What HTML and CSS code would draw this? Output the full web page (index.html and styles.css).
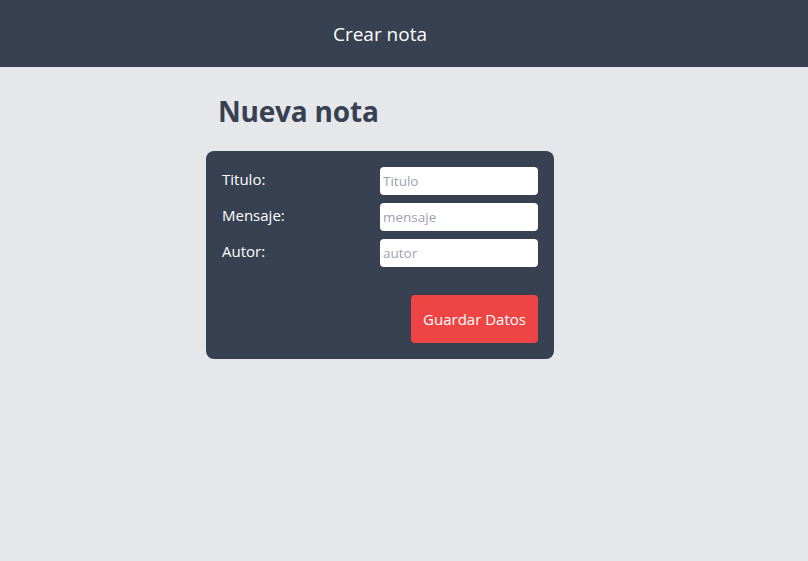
FILE: index.html
```html
<!DOCTYPE html>
<html lang="es">
<head>
<meta charset="utf-8">
<title>Crear nota</title>
<link rel="stylesheet" href="styles.css">
</head>
<body>
<header class="topbar">
  <div class="topbar-inner">Crear nota</div>
</header>
<main class="page">
  <section class="panel">
    <h1 class="title">Nueva nota</h1>
    <form class="card">
      <div class="grid">
        <label class="label" for="titulo">Titulo:</label>
        <input class="input" id="titulo" type="text" placeholder="Titulo">
        <label class="label" for="mensaje">Mensaje:</label>
        <input class="input" id="mensaje" type="text" placeholder="mensaje">
        <label class="label" for="autor">Autor:</label>
        <input class="input" id="autor" type="text" placeholder="autor">
      </div>
      <div class="actions">
        <button class="btn" type="button">Guardar Datos</button>
      </div>
    </form>
  </section>
</main>
</body>
</html>
```

FILE: styles.css
```css
* { box-sizing: border-box; }
html, body { margin: 0; padding: 0; }
body {
  background: #e5e7eb;
  font-family: "Open Sans", "Noto Sans", sans-serif;
  color: #374151;
  min-height: 561px;
}
.topbar {
  background: #374151;
  height: 67px;
  display: flex;
  justify-content: center;
  padding-right: 48px;
}
.topbar-inner {
  color: #ffffff;
  font-size: 19px;
  line-height: 68px;
}
.page {
  display: flex;
  justify-content: center;
  padding-right: 48px;
}
.panel {
  width: 348px;
}
.title {
  margin: 24px 0 0 12px;
  font-size: 28px;
  line-height: 40px;
  font-weight: 700;
  color: #374151;
  letter-spacing: -0.2px;
}
.card {
  margin-top: 20px;
  background: #374151;
  border-radius: 8px;
  padding: 16px;
}
.grid {
  display: grid;
  grid-template-columns: 1fr 1fr;
  row-gap: 8px;
}
.label {
  color: #ffffff;
  font-size: 15px;
  line-height: 24px;
  align-self: start;
}
.input {
  height: 28px;
  border: none;
  border-radius: 4px;
  padding: 0 3px;
  font-family: inherit;
  font-size: 13.5px;
  color: #374151;
  background: #ffffff;
  width: 100%;
  outline: none;
}
.input::placeholder { color: #9ca3af; }
.actions {
  display: flex;
  justify-content: flex-end;
  margin-top: 28px;
}
.btn {
  background: #ef4444;
  color: #ffffff;
  border: none;
  border-radius: 4px;
  font-family: inherit;
  font-size: 15px;
  line-height: 23px;
  padding: 0;
  white-space: nowrap;
  width: 127px;
  height: 48px;
  cursor: pointer;
}
```
